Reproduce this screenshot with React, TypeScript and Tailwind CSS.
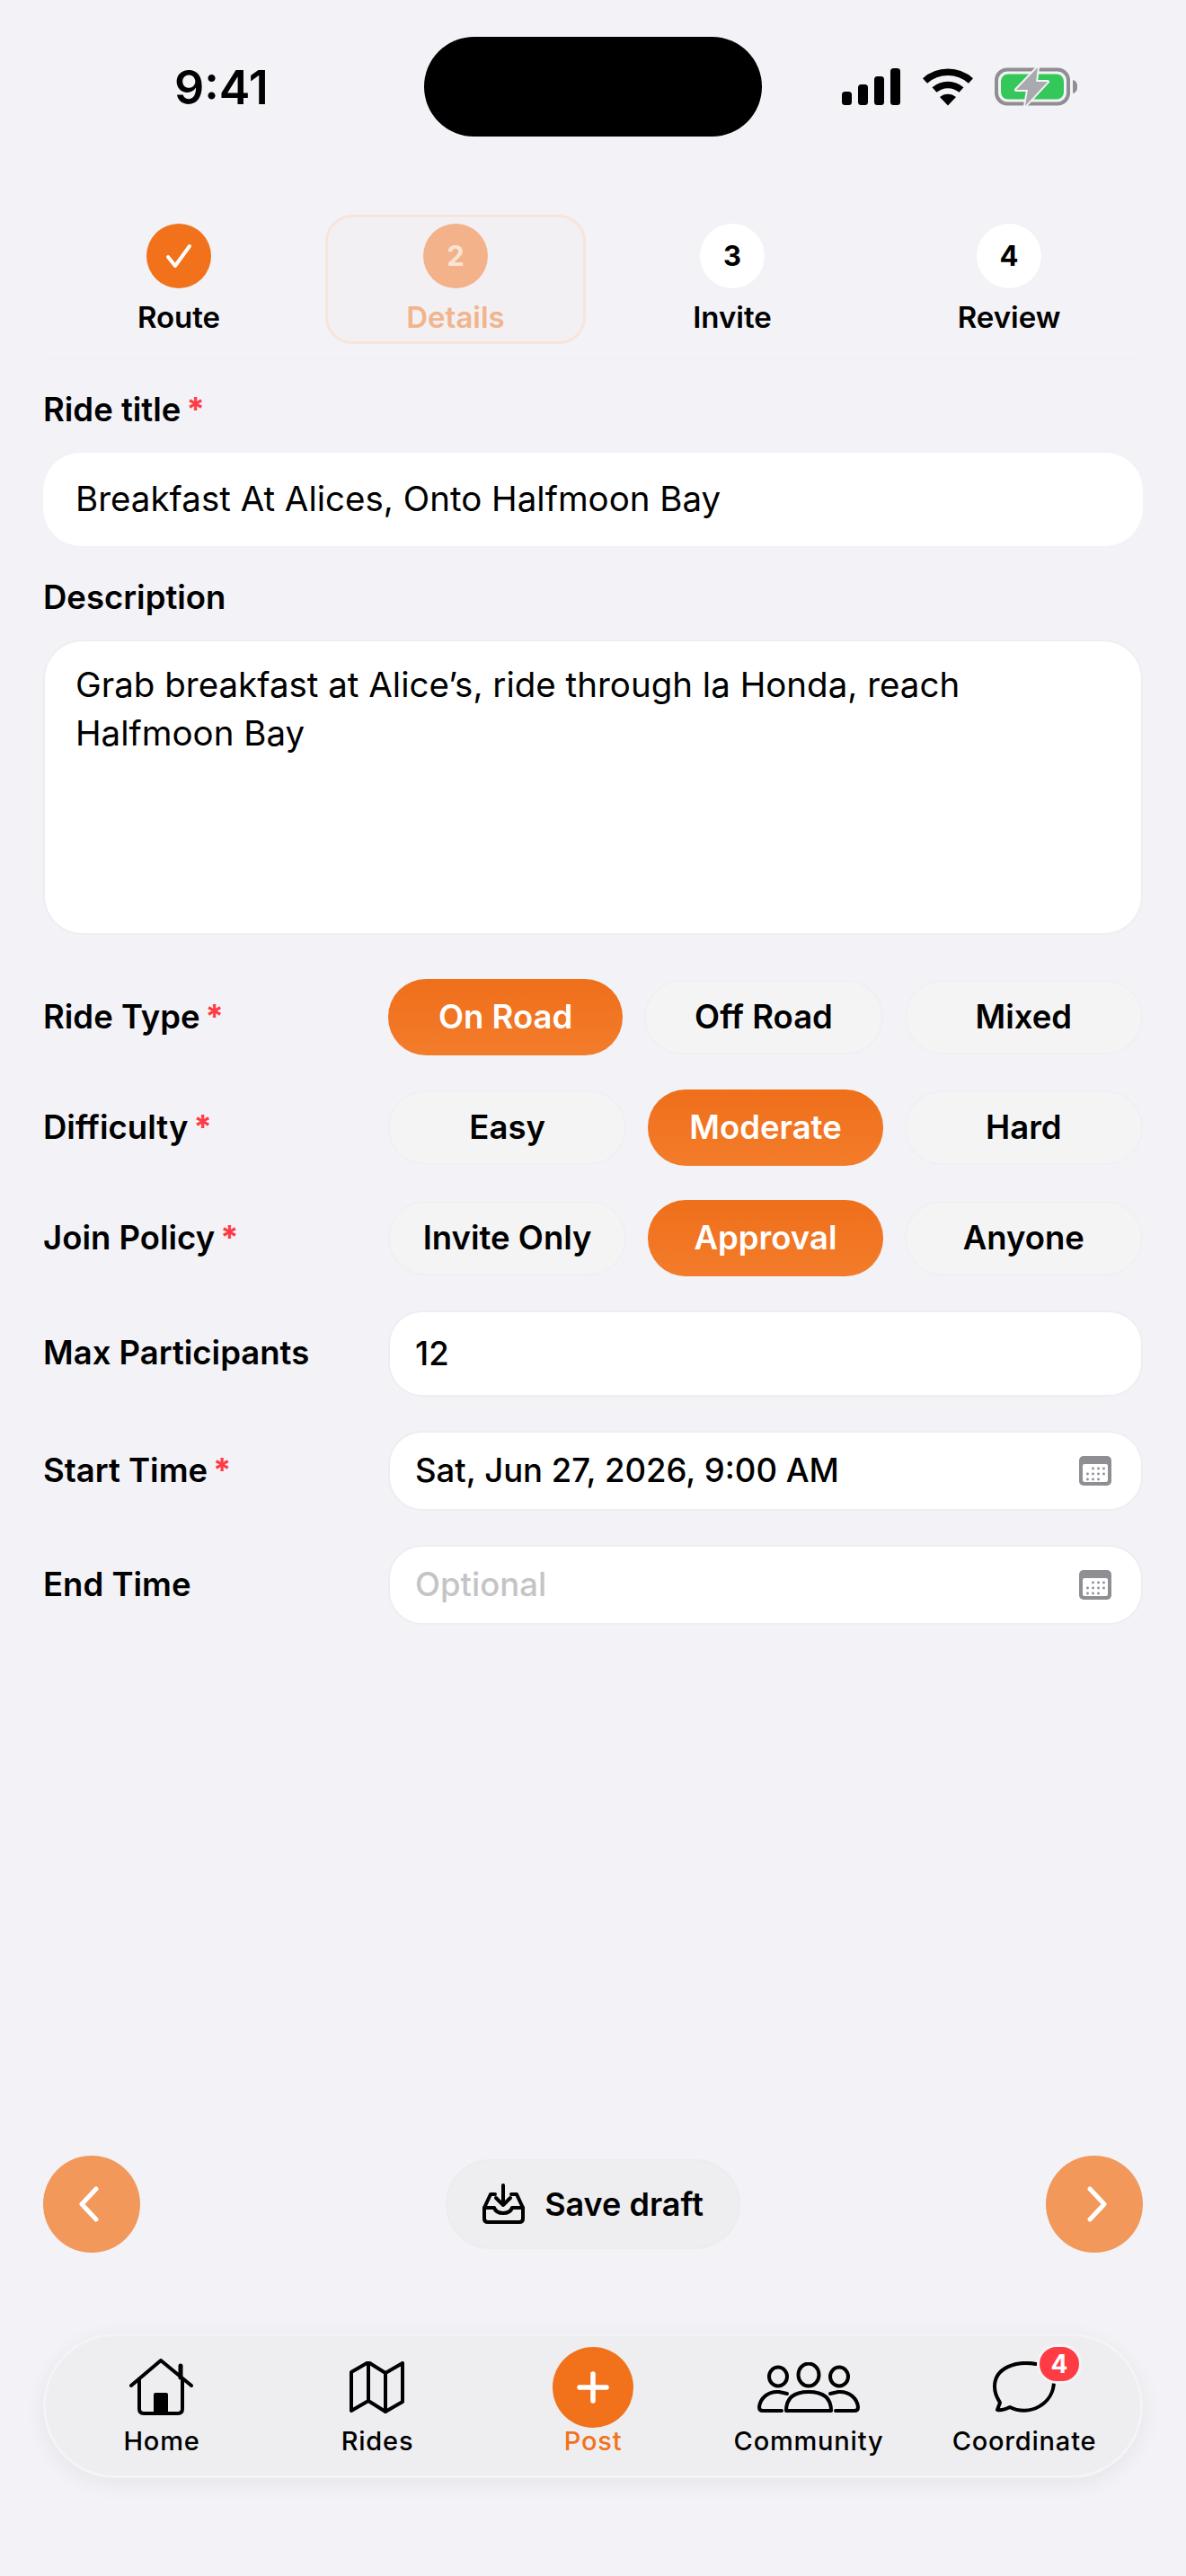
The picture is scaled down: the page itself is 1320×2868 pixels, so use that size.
import React from "react";

const font = { fontFamily: '"Inter", "Liberation Sans", sans-serif' };

function Signal() {
  return (
    <svg width="66" height="42" viewBox="0 0 66 42">
      <rect x="0" y="26" width="11" height="15" rx="3.5" fill="#000" />
      <rect x="18" y="18" width="11" height="23" rx="3.5" fill="#000" />
      <rect x="36" y="9" width="11" height="32" rx="3.5" fill="#000" />
      <rect x="54" y="0" width="11" height="41" rx="3.5" fill="#000" />
    </svg>
  );
}

function Wifi() {
  return (
    <svg width="58" height="42" viewBox="0 0 58 42">
      <path d="M3.5 14 C18 1 40 1 54.5 14" fill="none" stroke="#000" strokeWidth="7.5" strokeLinecap="butt" />
      <path d="M14 24 C22.5 16.5 35.5 16.5 44 24" fill="none" stroke="#000" strokeWidth="7.5" />
      <path d="M20 32 C25 27.5 33 27.5 38 32 L29 41.5 Z" fill="#000" />
    </svg>
  );
}

function Battery() {
  return (
    <svg width="94" height="46" viewBox="0 0 94 46">
      <rect x="2" y="3.5" width="80" height="38" rx="12" fill="none" stroke="#8e8e93" strokeWidth="4" />
      <rect x="7" y="8.5" width="70" height="28" rx="8" fill="#34c759" />
      <path d="M87 15 C91 16 92 19 92 22.5 C92 26 91 29 87 30 Z" fill="#8e8e93" />
      <path d="M48 1 L24 26 L37 26 L34 44 L59 17 L46 17 Z" fill="#a9a9ae" stroke="#f2f2f7" strokeWidth="4" strokeLinejoin="round" paintOrder="stroke" />
    </svg>
  );
}

function Calendar() {
  const dots = [
    [15, 13], [21, 13], [27, 13],
    [9, 19], [15, 19], [21, 19], [27, 19],
    [9, 25], [15, 25], [21, 25],
  ];
  return (
    <svg width="36" height="33" viewBox="0 0 36 33">
      <rect x="0" y="0" width="36" height="33" rx="5" fill="#8e8e93" />
      <rect x="4" y="9" width="28" height="20" rx="2" fill="#fff" />
      {dots.map(([x, y]) => (
        <circle key={`${x}-${y}`} cx={x + 0.5} cy={y + 1} r="1.4" fill="#8e8e93" />
      ))}
    </svg>
  );
}

function Req() {
  return <span className="ml-[6px] font-bold text-[#ff3b44]">*</span>;
}

function Step({ label, state, n }: { label: string; state: "done" | "active" | "todo"; n?: number }) {
  const active = state === "active";
  return (
    <div
      className={
        active
          ? "w-[290px] h-[144px] flex flex-col items-center pt-[7px] rounded-[30px] border-[3px] border-[#f7e5dc] bg-[#f3f0f3]"
          : "w-[290px] h-[144px] flex flex-col items-center pt-[7px] rounded-[30px] border-[3px] border-transparent"
      }
    >
      <div
        className={
          state === "done"
            ? "w-[72px] h-[72px] rounded-full flex items-center justify-center bg-[#f2721c]"
            : active
            ? "w-[72px] h-[72px] rounded-full flex items-center justify-center bg-[#f3b28a] text-[#fbe3d3] text-[31px] font-bold"
            : "w-[72px] h-[72px] rounded-full flex items-center justify-center bg-white text-black text-[31px] font-bold"
        }
      >
        {state === "done" ? (
          <svg width="30" height="28" viewBox="0 0 30 28">
            <path d="M3 15 L11 25 L27 3" fill="none" stroke="#fff" strokeWidth="4" strokeLinecap="round" strokeLinejoin="round" />
          </svg>
        ) : (
          n
        )}
      </div>
      <div className={active ? "mt-[12px] text-[33px] leading-[40px] font-semibold text-[#f2b48c]" : "mt-[12px] text-[33px] leading-[40px] font-semibold text-black"}>
        {label}
      </div>
    </div>
  );
}

function Chip({ label, on }: { label: string; on?: boolean }) {
  return (
    <div
      className={
        on
          ? "flex-1 h-[85px] rounded-[42px] flex items-center justify-center text-[36.5px] font-semibold text-white bg-gradient-to-b from-[#ef6f1a] to-[#f37c2a]"
          : "flex-1 h-[83px] rounded-[42px] flex items-center justify-center text-[36.5px] font-semibold text-black bg-[#f4f4f5] border-2 border-[#f0f0f3]"
      }
    >
      {label}
    </div>
  );
}

function Row({ label, req, children }: { label: string; req?: boolean; children: React.ReactNode }) {
  return (
    <div className="flex items-center">
      <div className="w-[384px] text-[36.5px] leading-[38px] font-semibold text-black pb-[2px]">
        {label}
        {req && <Req />}
      </div>
      <div className="flex-1 flex items-center gap-[24px]">{children}</div>
    </div>
  );
}

function Field({ h, value, placeholder, cal }: { h: string; value?: string; placeholder?: string; cal?: boolean }) {
  return (
    <div className={`${h} w-full rounded-[38px] bg-white border-2 border-[#eeeef2] pl-[28px] pr-[33px] flex items-center justify-between text-[36.5px]`}>
      <span className={placeholder ? "text-[#c4c4c7] font-medium" : "text-black font-medium"}>{placeholder ?? value}</span>
      {cal && <Calendar />}
    </div>
  );
}

function NavItem({ label, icon, orange }: { label: string; icon: React.ReactNode; orange?: boolean }) {
  return (
    <div className="w-[240px] flex flex-col items-center">
      <div className="h-[90px] flex items-center justify-center">{icon}</div>
      <div className={orange ? "text-[29px] leading-[30px] tracking-[0.8px] text-[#f2721c] font-medium" : "text-[29px] leading-[30px] tracking-[0.8px] text-black font-medium"}>
        {label}
      </div>
    </div>
  );
}

function Round({ dir }: { dir: "l" | "r" }) {
  return (
    <div className={dir === "l" ? "w-[108px] h-[108px] rounded-full bg-[#f2985a] flex items-center justify-center pr-[6px]" : "w-[108px] h-[108px] rounded-full bg-[#f2985a] flex items-center justify-center pl-[6px]"}>
      <svg width="24" height="40" viewBox="0 0 24 40">
        <path
          d={dir === "l" ? "M20 3 L4 20 L20 37" : "M4 3 L20 20 L4 37"}
          fill="none"
          stroke="#fff"
          strokeWidth="5"
          strokeLinecap="round"
          strokeLinejoin="round"
        />
      </svg>
    </div>
  );
}

export default function App() {
  const S = { fill: "none", stroke: "#000", strokeWidth: 4, strokeLinecap: "round" as const, strokeLinejoin: "round" as const };
  return (
    <div style={font} className="w-[1320px] h-[2868px] overflow-hidden flex flex-col bg-[#f2f2f7] text-black">
      {/* status bar */}
      <div className="relative h-[196px] flex items-center justify-between pl-[194px] pr-[119px]">
        <div className="text-[52px] leading-none font-semibold">9:41</div>
        <div className="absolute left-[472px] top-[41px] w-[376px] h-[111px] rounded-full bg-black" />
        <div className="flex items-center gap-[23px] pb-[2px]">
          <Signal />
          <Wifi />
          <Battery />
        </div>
      </div>

      {/* stepper */}
      <div className="mx-[48px] flex gap-[18px] pl-[6px] pt-[43px] pb-[15px] border-b-2 border-[#f0f0f5]">
        <Step label="Route" state="done" />
        <Step label="Details" state="active" n={2} />
        <Step label="Invite" state="todo" n={3} />
        <Step label="Review" state="todo" n={4} />
      </div>

      {/* form */}
      <div className="px-[48px]">
        <div className="mt-[36px] text-[36.5px] leading-[40px] font-semibold">
          Ride title
          <Req />
        </div>
        <div className="mt-[28px] h-[104px] rounded-[42px] bg-white flex items-center pl-[36px] text-[38.5px]">
          Breakfast At Alices, Onto Halfmoon Bay
        </div>
        <div className="mt-[37px] text-[36.5px] leading-[40px] font-semibold">Description</div>
        <div className="mt-[27px] h-[329px] rounded-[44px] bg-white border-2 border-[#eeeef2] pl-[34px] pr-[60px] pt-[21px] text-[38.5px] leading-[54px]">
          Grab breakfast at Alice’s, ride through la Honda, reach Halfmoon Bay
        </div>

        <div className="mt-[49px] flex flex-col gap-[38px]">
          <Row label="Ride Type" req>
            <Chip label="On Road" on />
            <Chip label="Off Road" />
            <Chip label="Mixed" />
          </Row>
          <Row label="Difficulty" req>
            <Chip label="Easy" />
            <Chip label="Moderate" on />
            <Chip label="Hard" />
          </Row>
          <Row label="Join Policy" req>
            <Chip label="Invite Only" />
            <Chip label="Approval" on />
            <Chip label="Anyone" />
          </Row>
          <Row label="Max Participants">
            <Field h="h-[96px]" value="12" />
          </Row>
          <Row label="Start Time" req>
            <Field h="h-[89px]" value="Sat, Jun 27, 2026, 9:00 AM" cal />
          </Row>
          <Row label="End Time">
            <Field h="h-[89px]" placeholder="Optional" cal />
          </Row>
        </div>
      </div>

      {/* footer */}
      <div className="mt-auto px-[48px] pb-[109px]">
        <div className="flex items-center justify-between">
          <Round dir="l" />
          <div className="w-[328px] h-[100px] rounded-full bg-[#eeeef0] border-2 border-[#ececef] flex items-center justify-center gap-[22px]">
            <svg width="47" height="46" viewBox="0 0 47 46">
              <path d="M23 2 V24 M15 16 L23 24 L31 16" {...S} />
              <path d="M14 12 H9 L2 27 V39 Q2 43 6 43 H41 Q45 43 45 39 V27 L38 12 H32" {...S} />
              <path d="M2 27 H13 Q15 33 23 33 Q31 33 33 27 H45" {...S} />
            </svg>
            <span className="text-[36px] font-semibold">Save draft</span>
          </div>
          <Round dir="r" />
        </div>

        <div className="mt-[90px] h-[161px] rounded-[80px] bg-[#eeeef0] border-[3px] border-[#f4f4f6] shadow-[0_6px_24px_rgba(0,0,0,0.06)] flex px-[9px] pt-[12px]">
          <NavItem
            label="Home"
            icon={
              <svg width="72" height="64" viewBox="0 0 72 64">
                <path d="M2 30 L35 2 L69 30" {...S} />
                <path d="M57 8 V21" {...S} strokeWidth={5} />
                <path d="M11 23 V56 Q11 61 16 61 H54 Q59 61 59 56 V23" {...S} />
                <rect x="27" y="38" width="16" height="23" rx="2" fill="#000" />
              </svg>
            }
          />
          <NavItem
            label="Rides"
            icon={
              <svg width="62" height="58" viewBox="0 0 62 58">
                <path d="M2 12 L21 1 L40 13 L59 2 V45 L40 56 L21 44 L2 55 Z" {...S} />
                <path d="M21 1 V44 M40 13 V56" {...S} />
              </svg>
            }
          />
          <NavItem
            orange
            label="Post"
            icon={
              <div className="w-[90px] h-[90px] rounded-full bg-[#f2721c] flex items-center justify-center">
                <svg width="36" height="36" viewBox="0 0 36 36">
                  <path d="M18 3 V33 M3 18 H33" fill="none" stroke="#fff" strokeWidth="5.5" strokeLinecap="round" />
                </svg>
              </div>
            }
          />
          <NavItem
            label="Community"
            icon={
              <svg width="114" height="56" viewBox="0 0 114 56">
                <ellipse cx="23" cy="16" rx="10" ry="10.5" {...S} />
                <ellipse cx="57" cy="14" rx="11.5" ry="12.5" {...S} />
                <ellipse cx="91" cy="16" rx="10" ry="10.5" {...S} />
                <path d="M32 54 Q32 33 57 33 Q82 33 82 54 Z" {...S} />
                <path d="M27 54 H6 Q2 54 2 50 C3 40 12 32 24 33 L33 35" {...S} />
                <path d="M87 54 H108 Q112 54 112 50 C111 40 102 32 90 33 L81 35" {...S} />
              </svg>
            }
          />
          <NavItem
            label="Coordinate"
            icon={
              <div className="relative">
                <svg width="70" height="58" viewBox="0 0 70 58">
                  <path d="M48 3 C26 -1 2 7 2 28 C2 35 4 39 8 46 L5 54 C10 55 15 53 19 51 C40 62 68 48 68 22" {...S} />
                </svg>
                <div className="absolute -top-[19px] left-[49px] w-[50px] h-[44px] rounded-full bg-[#ff3b44] border-[3px] border-[#f4f4f6] flex items-center justify-center text-white text-[28px] font-bold">
                  4
                </div>
              </div>
            }
          />
        </div>
      </div>
    </div>
  );
}
